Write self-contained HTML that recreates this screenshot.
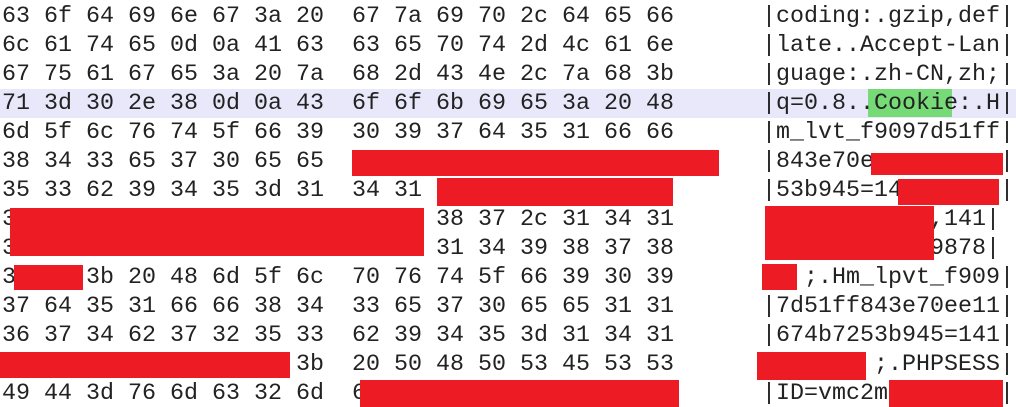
<!DOCTYPE html>
<html><head><meta charset="utf-8"><style>
html,body{margin:0;padding:0;background:#fff;width:1016px;height:407px;overflow:hidden;position:relative}
.r{position:absolute;left:0;width:1016px;height:29px}
.t{position:absolute;font-family:"Liberation Mono","Courier New",monospace;font-size:23.33px;line-height:29px;white-space:pre;color:#222;top:0}
.h{left:2px}.a{left:762px}
.red{position:absolute;background:#ed1c24}
</style></head><body>
<div class="r" style="top:89px;height:29px;background:#e8e8fa"></div>
<div class="red" style="left:868px;top:89px;width:84px;height:28px;background:#76db76"></div>

<div class="r" style="top:3px"><span class="t h">63 6f 64 69 6e 67 3a 20  67 7a 69 70 2c 64 65 66</span><span class="t a">|coding:.gzip,def|</span></div>
<div class="r" style="top:32px"><span class="t h">6c 61 74 65 0d 0a 41 63  63 65 70 74 2d 4c 61 6e</span><span class="t a">|late..Accept-Lan|</span></div>
<div class="r" style="top:61px"><span class="t h">67 75 61 67 65 3a 20 7a  68 2d 43 4e 2c 7a 68 3b</span><span class="t a">|guage:.zh-CN,zh;|</span></div>
<div class="r" style="top:90px"><span class="t h">71 3d 30 2e 38 0d 0a 43  6f 6f 6b 69 65 3a 20 48</span><span class="t a">|q=0.8..Cookie:.H|</span></div>
<div class="r" style="top:119px"><span class="t h">6d 5f 6c 76 74 5f 66 39  30 39 37 64 35 31 66 66</span><span class="t a">|m_lvt_f9097d51ff|</span></div>
<div class="r" style="top:148px"><span class="t h">38 34 33 65 37 30 65 65</span><span class="t a">|843e70ee        |</span></div>
<div class="r" style="top:177px"><span class="t h">35 33 62 39 34 35 3d 31  34 31</span><span class="t a">|53b945=14       |</span></div>
<div class="r" style="top:206px"><span class="t h">3                              38 37 2c 31 34 31</span><span class="t a">|           ,141|</span></div>
<div class="r" style="top:235px"><span class="t h">3                              31 34 39 38 37 38</span><span class="t a">|           9878|</span></div>
<div class="r" style="top:264px"><span class="t h">3     3b 20 48 6d 5f 6c  70 76 74 5f 66 39 30 39</span><span class="t a">|  ;.Hm_lpvt_f909|</span></div>
<div class="r" style="top:293px"><span class="t h">37 64 35 31 66 66 38 34  33 65 37 30 65 65 31 31</span><span class="t a">|7d51ff843e70ee11|</span></div>
<div class="r" style="top:322px"><span class="t h">36 37 34 62 37 32 35 33  62 39 34 35 3d 31 34 31</span><span class="t a">|674b7253b945=141|</span></div>
<div class="r" style="top:351px"><span class="t h">                     3b  20 50 48 50 53 45 53 53</span><span class="t a">        ;.PHPSESS|</span></div>
<div class="r" style="top:380px"><span class="t h">49 44 3d 76 6d 63 32 6d  6</span><span class="t a">|ID=vmc2mh       |</span></div>

<div class="red" style="left:352px;top:150px;width:367px;height:26px"></div>
<div class="red" style="left:871px;top:153px;width:132px;height:22px"></div>
<div class="red" style="left:437px;top:178px;width:236px;height:28px"></div>
<div class="red" style="left:898px;top:179px;width:101px;height:26px"></div>
<div class="red" style="left:10px;top:208px;width:414px;height:48px"></div>
<div class="red" style="left:765px;top:206px;width:169px;height:54px"></div>
<div class="red" style="left:14px;top:265px;width:69px;height:25px"></div>
<div class="red" style="left:762px;top:264px;width:35px;height:26px"></div>
<div class="red" style="left:0px;top:352px;width:290px;height:26px"></div>
<div class="red" style="left:757px;top:352px;width:109px;height:28px"></div>
<div class="red" style="left:360px;top:380px;width:319px;height:27px"></div>
<div class="red" style="left:889px;top:380px;width:114px;height:27px"></div>
</body></html>
